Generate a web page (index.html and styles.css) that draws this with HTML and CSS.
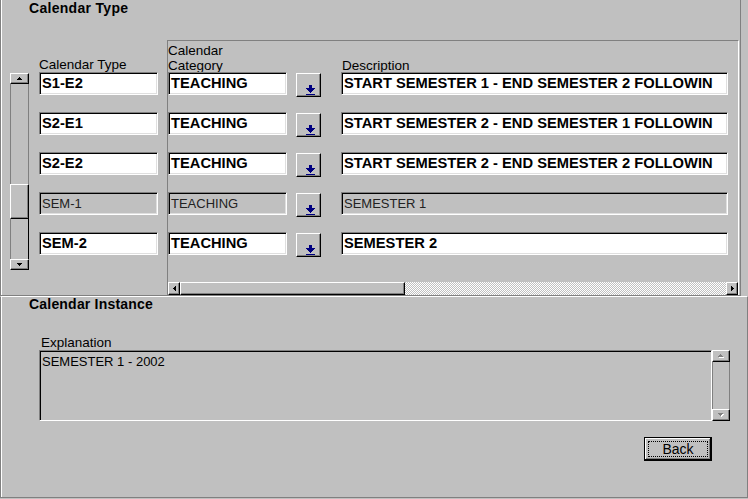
FILE: index.html
```html
<!DOCTYPE html>
<html>
<head>
<meta charset="utf-8">
<link rel="stylesheet" href="styles.css">
</head>
<body>
<section class="frame frame-top">
  <h1 class="frame-title">Calendar Type</h1>
  <div class="top-body">
    <div class="vscroll">
      <div class="sb-btn"><svg width="5" height="3" viewBox="0 0 5 3" shape-rendering="crispEdges"><path d="M2 0h1v1H2zM1 1h3v1H1zM0 2h5v1H0z"/></svg></div>
      <div class="vtrack">
        <div class="vtrack-upper"></div>
        <div class="vthumb"></div>
        <div class="vtrack-lower"></div>
      </div>
      <div class="sb-btn"><svg width="5" height="3" viewBox="0 0 5 3" shape-rendering="crispEdges"><path d="M0 0h5v1H0zM1 1h3v1H1zM2 2h1v1H2z"/></svg></div>
    </div>

    <div class="type-col">
      <div class="col-label">Calendar Type</div>
      <div class="field">S1-E2</div>
      <div class="field">S2-E1</div>
      <div class="field">S2-E2</div>
      <div class="field off">SEM-1</div>
      <div class="field">SEM-2</div>
    </div>

    <div class="panel">
      <div class="grid">
        <div class="hdr hdr-cat">Calendar<br>Category</div>
        <div class="hdr hdr-desc">Description</div>

        <div class="field">TEACHING</div>
        <button class="dd-btn"><svg width="9" height="10" viewBox="0 0 9 10" shape-rendering="crispEdges" fill="#000080"><path d="M3 0h3v3H3zM0 3h9v1H0zM1 4h7v1H1zM2 5h5v1H2zM3 6h3v1H3zM4 7h1v1H4zM0 9h9v1H0z"/></svg></button>
        <div class="field">START SEMESTER 1 - END SEMESTER 2 FOLLOWIN</div>

        <div class="field">TEACHING</div>
        <button class="dd-btn"><svg width="9" height="10" viewBox="0 0 9 10" shape-rendering="crispEdges" fill="#000080"><path d="M3 0h3v3H3zM0 3h9v1H0zM1 4h7v1H1zM2 5h5v1H2zM3 6h3v1H3zM4 7h1v1H4zM0 9h9v1H0z"/></svg></button>
        <div class="field">START SEMESTER 2 - END SEMESTER 1 FOLLOWIN</div>

        <div class="field">TEACHING</div>
        <button class="dd-btn"><svg width="9" height="10" viewBox="0 0 9 10" shape-rendering="crispEdges" fill="#000080"><path d="M3 0h3v3H3zM0 3h9v1H0zM1 4h7v1H1zM2 5h5v1H2zM3 6h3v1H3zM4 7h1v1H4zM0 9h9v1H0z"/></svg></button>
        <div class="field">START SEMESTER 2 - END SEMESTER 2 FOLLOWIN</div>

        <div class="field off">TEACHING</div>
        <button class="dd-btn"><svg width="9" height="10" viewBox="0 0 9 10" shape-rendering="crispEdges" fill="#000080"><path d="M3 0h3v3H3zM0 3h9v1H0zM1 4h7v1H1zM2 5h5v1H2zM3 6h3v1H3zM4 7h1v1H4zM0 9h9v1H0z"/></svg></button>
        <div class="field off">SEMESTER 1</div>

        <div class="field">TEACHING</div>
        <button class="dd-btn"><svg width="9" height="10" viewBox="0 0 9 10" shape-rendering="crispEdges" fill="#000080"><path d="M3 0h3v3H3zM0 3h9v1H0zM1 4h7v1H1zM2 5h5v1H2zM3 6h3v1H3zM4 7h1v1H4zM0 9h9v1H0z"/></svg></button>
        <div class="field">SEMESTER 2</div>
      </div>

      <div class="hscroll">
        <div class="sb-btn"><svg width="3" height="5" viewBox="0 0 3 5" shape-rendering="crispEdges"><path d="M2 0h1v5H2zM1 1h1v3H1zM0 2h1v1H0z"/></svg></div>
        <div class="hthumb"></div>
        <div class="htrack"></div>
        <div class="sb-btn"><svg width="3" height="5" viewBox="0 0 3 5" shape-rendering="crispEdges"><path d="M0 0h1v5H0zM1 1h1v3H1zM2 2h1v1H2z"/></svg></div>
      </div>
    </div>
  </div>
</section>

<section class="frame frame-bottom">
  <h2 class="frame-title">Calendar Instance</h2>
  <div class="col-label expl-label">Explanation</div>
  <div class="expl">
    <div class="textbox">SEMESTER 1 - 2002</div>
    <div class="vscroll small">
      <div class="sb-btn"><svg width="6" height="4" viewBox="0 0 6 4" shape-rendering="crispEdges"><path fill="#fff" d="M3 1h1v1H3zM2 2h3v1H2zM1 3h5v1H1z"/><path fill="#808080" d="M2 0h1v1H2zM1 1h3v1H1zM0 2h5v1H0z"/></svg></div>
      <div class="vtrack plain"></div>
      <div class="sb-btn"><svg width="6" height="4" viewBox="0 0 6 4" shape-rendering="crispEdges"><path fill="#fff" d="M1 1h5v1H1zM2 2h3v1H2zM3 3h1v1H3z"/><path fill="#808080" d="M0 0h5v1H0zM1 1h3v1H1zM2 2h1v1H2z"/></svg></div>
    </div>
  </div>
  <div class="actions">
    <button class="back"><span>Back</span></button>
  </div>
</section>
</body>
</html>
```

FILE: styles.css
```css
* { box-sizing: border-box; }
html, body { margin: 0; padding: 0; }
body {
  width: 748px;
  height: 499px;
  overflow: hidden;
  background: #c0c0c0;
  font-family: "Liberation Sans", Arial, sans-serif;
  color: #000;
}

/* frames */
.frame {
  border: 1px solid #808080;
  box-shadow: inset 1px 0 #fff;
}
.frame-top {
  width: 741px;
  height: 296px;
  border-top: 0;
}
.frame-bottom {
  width: 748px;
  height: 202px;
  border-top-color: #fff;
}
.frame-title {
  margin: 0;
  padding-left: 28px;
  font-size: 14px;
  font-weight: bold;
  line-height: 16px;
  letter-spacing: 0.3px;
  white-space: nowrap;
}
.frame-bottom .frame-title {
  margin-top: -1px;
  letter-spacing: 0.2px;
}

.top-body {
  display: flex;
  align-items: flex-start;
}

/* scrollbars */
.vscroll {
  display: flex;
  flex-direction: column;
  margin: 57px 0 0 9px;
  width: 19px;
  height: 197px;
}
.sb-btn {
  flex: none;
  height: 11px;
  background: #c0c0c0;
  border: 1px solid;
  border-color: #fff #000 #000 #fff;
  box-shadow: inset -1px -1px #808080;
  display: flex;
  align-items: center;
  justify-content: center;
}
.sb-btn svg { display: block; }
.vtrack {
  flex: 1;
  display: flex;
  flex-direction: column;
}
.vtrack-upper {
  height: 100px;
  border-left: 1px solid #808080;
  border-right: 1px solid #808080;
}
.vthumb {
  height: 35px;
  background: #c0c0c0;
  border: 1px solid;
  border-color: #fff #000 #000 #fff;
  box-shadow: inset -1px -1px #808080;
}
.vtrack-lower {
  flex: 1;
  border-left: 1px solid #808080;
  border-right: 1px solid #000;
}
.vtrack.plain {
  border-left: 1px solid #808080;
  border-right: 1px solid #808080;
}
.vscroll.small {
  margin: 0;
  width: 18px;
  height: 71px;
}
.vscroll.small .sb-btn { height: 12px; }

/* calendar type column */
.type-col {
  margin: 41px 0 0 10px;
  width: 119px;
  display: grid;
  grid-template-rows: 15px repeat(5, 40px);
  align-items: start;
}
.col-label {
  font-size: 13.5px;
  line-height: 15px;
  white-space: nowrap;
}

/* fields */
.field {
  height: 23px;
  padding: 2px 2px 0;
  border: 1px solid;
  border-color: #808080 #fff #fff #808080;
  box-shadow: inset 1px 1px #000, inset -1px -1px #dfdfdf;
  background: #fff;
  font-size: 14.7px;
  font-weight: bold;
  line-height: 17px;
  white-space: nowrap;
  overflow: hidden;
}
.field.off {
  background: #c0c0c0;
  font-weight: normal;
  font-size: 13px;
  color: #222;
}

/* scrolling panel */
.panel {
  margin: 24px 0 0 9px;
  width: 572px;
  height: 255px;
  border-top: 1px solid #808080;
  border-left: 1px solid #808080;
  border-right: 1px solid #fff;
  padding-top: 2px;
}
.grid {
  display: grid;
  grid-template-columns: 128px 45px 387px;
  grid-template-rows: 29px repeat(5, 40px);
  align-items: start;
}
.hdr {
  font-size: 13.5px;
  line-height: 15px;
  white-space: nowrap;
}
.hdr-cat { grid-column: 1 / 3; }
.hdr-desc {
  grid-column: 3;
  align-self: end;
  margin-bottom: -1px;
  padding-left: 1px;
}
.grid .field:first-child { width: 119px; }
.grid > .field { width: 100%; }
.grid > .field:nth-child(3n) { width: 119px; }
.dd-btn {
  display: block;
  width: 25px;
  height: 24px;
  margin: 1px 0 0;
  padding: 9px 0 0 9px;
  background: #c0c0c0;
  border: 1px solid;
  border-color: #fff #000 #000 #fff;
  box-shadow: inset -1px -1px #808080;
  text-align: left;
}
.dd-btn svg { display: block; }

.hscroll {
  display: flex;
  margin-top: 10px;
  width: 570px;
  height: 13px;
}
.hscroll .sb-btn {
  width: 12px;
  height: 13px;
}
.hthumb {
  width: 225px;
  background: #c0c0c0;
  border: 1px solid;
  border-color: #fff #000 #000 #fff;
  box-shadow: inset -1px -1px #808080;
}
.htrack {
  flex: 1;
  background: repeating-conic-gradient(#fff 0 25%, #c0c0c0 0 50%) 0 0 / 2px 2px;
}

/* calendar instance */
.expl-label {
  margin-top: 23px;
  padding-left: 40px;
}
.expl {
  display: flex;
  margin-left: 38px;
  height: 71px;
}
.textbox {
  width: 673px;
  height: 71px;
  padding: 3px 2px;
  border: 1px solid;
  border-color: #808080 #fff #fff #808080;
  box-shadow: inset 1px 1px #000;
  background: #c0c0c0;
  font-size: 13px;
  line-height: 15px;
  white-space: nowrap;
}
.actions {
  margin-top: 16px;
  padding-left: 643px;
}
.back {
  display: block;
  width: 68px;
  height: 24px;
  padding: 3px;
  margin: 0;
  border: 1px solid #000;
  background: #c0c0c0;
  box-shadow: inset -1px -1px #000, inset 1px 1px #fff, inset -2px -2px #808080;
  font-family: inherit;
  font-size: 14px;
  color: #000;
}
.back span {
  display: flex;
  align-items: center;
  justify-content: center;
  height: 100%;
  border: 1px dotted #000;
}
```
